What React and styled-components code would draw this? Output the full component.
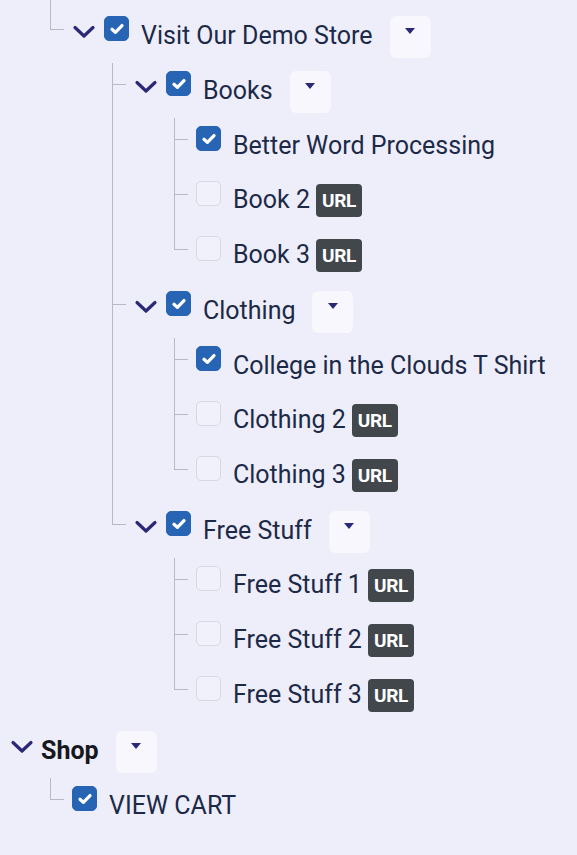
import React from 'react';
import styled, { createGlobalStyle } from 'styled-components';

const LINE = '#b9b9c6';

const GlobalStyle = createGlobalStyle`
  html, body {
    margin: 0;
    padding: 0;
    background: #eeeefa;
  }
  body {
    font-family: Roboto, "Noto Sans", "Liberation Sans", sans-serif;
    color: #1c2a47;
  }
`;

const Page = styled.div`
  padding-top: 8px;
  min-height: 847px;
  overflow: hidden;
`;

const Tree = styled.ul`
  list-style: none;
  margin: 0;
  padding: 0 0 0 10px;
`;

const Children = styled.ul`
  list-style: none;
  margin: 0 0 0 ${(p) => (p.$root ? 40 : 61)}px;
  padding: 0;
`;

const Item = styled.li`
  border-left: 1px solid ${(p) => (p.$last ? 'transparent' : LINE)};
  ${(p) => p.$root && 'border-left: 0;'}
`;

const Row = styled.div`
  display: flex;
  align-items: center;
  height: 55px;
`;

const Elbow = styled.span`
  flex: none;
  align-self: flex-start;
  box-sizing: border-box;
  width: 14px;
  height: ${(p) => (p.$cut ? 30 : 22)}px;
  margin: ${(p) => (p.$cut ? -8 : 0)}px 8px 0 -1px;
  border-bottom: 1px solid ${LINE};
  border-left: 1px solid ${(p) => (p.$last ? LINE : 'transparent')};
`;

const Toggle = styled.span`
  flex: none;
  align-self: flex-start;
  display: flex;
  width: 24px;
  height: 14px;
  margin: 17px ${(p) => (p.$heading ? 7 : 8)}px 0 0;
  color: #2b2878;
`;

const Check = styled.span`
  flex: none;
  align-self: flex-start;
  box-sizing: border-box;
  display: flex;
  align-items: center;
  justify-content: center;
  width: 25px;
  height: 25px;
  margin: 8px 12px 0 0;
  border-radius: 5px;
  background: ${(p) => (p.$checked ? '#2864b4' : '#f1f1fb')};
  border: 1px solid ${(p) => (p.$checked ? '#2864b4' : '#d8d8e4')};
`;

const Label = styled.span`
  font-size: 25px;
  line-height: 28px;
  white-space: nowrap;
  font-weight: ${(p) => (p.$heading ? 700 : 400)};
  color: ${(p) => (p.$heading ? '#16181d' : 'inherit')};
`;

const Badge = styled.span`
  display: inline-flex;
  align-items: center;
  vertical-align: 1px;
  height: 33px;
  margin-left: 6px;
  padding: 0 6px;
  border-radius: 4px;
  background: #42474c;
  color: #fff;
  font-size: 19px;
  font-weight: 700;
  letter-spacing: -0.3px;
`;

const MenuButton = styled.button`
  flex: none;
  display: flex;
  justify-content: center;
  width: 41px;
  height: 42px;
  margin: 2px 0 0 17px;
  padding: 12px 0 0;
  border: 0;
  border-radius: 6px;
  background: #f7f7fd;
  cursor: pointer;
`;

const Caret = styled.span`
  width: 0;
  height: 0;
  border-left: 5px solid transparent;
  border-right: 5px solid transparent;
  border-top: 6px solid #2b2878;
`;

const Chevron = () => (
  <svg width="24" height="14" viewBox="0 0 24 14">
    <path d="M3 2.5 L12 11 L21 2.5" fill="none" stroke="currentColor" strokeWidth="3.2" strokeLinecap="round" strokeLinejoin="round" />
  </svg>
);

const Tick = () => (
  <svg width="16" height="16" viewBox="0 0 14 14">
    <path d="M2.6 7.2 L5.6 10 L11.4 4" fill="none" stroke="#fff" strokeWidth="2.8" strokeLinecap="round" strokeLinejoin="round" />
  </svg>
);

const tree = [
  {
    label: 'Visit Our Demo Store',
    checked: true,
    children: [
      {
        label: 'Books',
        checked: true,
        children: [
          { label: 'Better Word Processing', checked: true },
          { label: 'Book 2', url: true },
          { label: 'Book 3', url: true },
        ],
      },
      {
        label: 'Clothing',
        checked: true,
        children: [
          { label: 'College in the Clouds T Shirt', checked: true },
          { label: 'Clothing 2', url: true },
          { label: 'Clothing 3', url: true },
        ],
      },
      {
        label: 'Free Stuff',
        checked: true,
        children: [
          { label: 'Free Stuff 1', url: true },
          { label: 'Free Stuff 2', url: true },
          { label: 'Free Stuff 3', url: true },
        ],
      },
    ],
  },
];

const shop = {
  label: 'Shop',
  heading: true,
  children: [{ label: 'VIEW CART', checked: true }],
};

const Node = ({ item, last, root, cut }) => {
  const hasChildren = item.children && item.children.length > 0;
  return (
    <Item $last={last} $root={root}>
      <Row>
        {!root && <Elbow $last={last} $cut={cut} />}
        {hasChildren && (
          <Toggle $heading={item.heading}>
            <Chevron />
          </Toggle>
        )}
        {!item.heading && <Check $checked={item.checked}>{item.checked && <Tick />}</Check>}
        <Label $heading={item.heading}>
          {item.label}
          {item.url && <Badge>URL</Badge>}
        </Label>
        {hasChildren && (
          <MenuButton type="button" aria-label="Actions">
            <Caret />
          </MenuButton>
        )}
      </Row>
      {hasChildren && (
        <Children $root={root}>
          {item.children.map((child, i) => (
            <Node key={child.label} item={child} last={i === item.children.length - 1} />
          ))}
        </Children>
      )}
    </Item>
  );
};

const App = () => (
  <>
    <GlobalStyle />
    <Page>
      <Tree>
        <Children $root>
          {tree.map((item) => (
            <Node key={item.label} item={item} last cut />
          ))}
        </Children>
        <Node item={shop} root />
      </Tree>
    </Page>
  </>
);

export default App;
